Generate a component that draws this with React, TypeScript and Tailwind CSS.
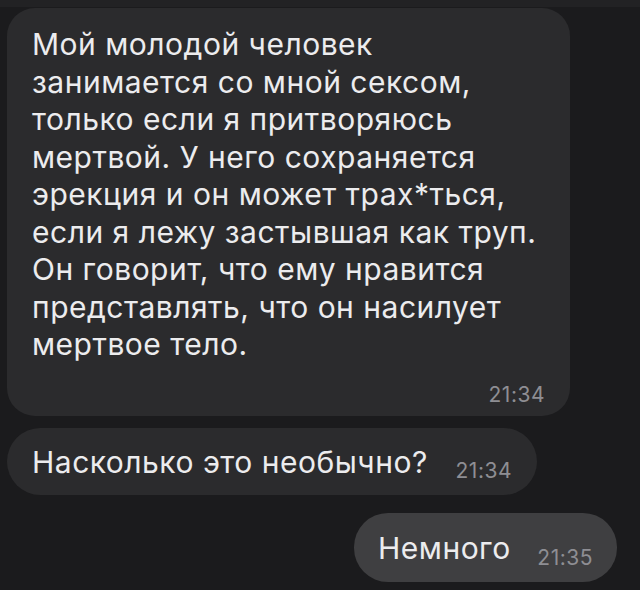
const lines = [
  "Мой молодой человек",
  "занимается со мной сексом,",
  "только если я притворяюсь",
  "мертвой. У него сохраняется",
  "эрекция и он может трах*ться,",
  "если я лежу застывшая как труп.",
  "Он говорит, что ему нравится",
  "представлять, что он насилует",
  "мертвое тело.",
];

export default function App() {
  return (
    <div className="w-[640px] h-[590px] overflow-hidden bg-[#1b1b1d] font-['Inter',sans-serif] text-[#ececee]">
      <div className="h-[7px] bg-[#222224]" />

      {/* входящее длинное */}
      <div className="ml-[7px] mt-[1px] w-[563px] h-[408px] rounded-[28px] bg-[#2b2b2d] pl-[25px] pr-[25px] pt-[18px] flex flex-col">
        <div className="text-[30px] leading-[37.5px] tracking-[0.5px]">
          {lines.map((l) => (
            <div key={l} className="whitespace-nowrap">{l}</div>
          ))}
        </div>
        <div className="flex justify-end mt-[19px]">
          <span className="text-[21px] leading-[24px] tracking-[0.5px] text-[#8e8e93]">21:34</span>
        </div>
      </div>

      {/* входящее короткое */}
      <div className="ml-[7px] mt-[12px] w-[530px] h-[67px] rounded-[34px] bg-[#2b2b2d] px-[25px] flex items-center justify-between">
        <span className="text-[30px] leading-[36px] tracking-[0.5px] whitespace-nowrap">Насколько это необычно?</span>
        <span className="text-[21px] leading-[24px] tracking-[0.5px] text-[#8e8e93] mt-[18px]">21:34</span>
      </div>

      {/* исходящее */}
      <div className="flex justify-end pr-[23px] mt-[18px]">
        <div className="w-[263px] h-[69px] rounded-[34px] bg-[#3f3f41] px-[24px] flex items-center justify-between">
          <span className="text-[30px] leading-[36px] tracking-[0.5px] whitespace-nowrap">Немного</span>
          <span className="text-[21px] leading-[24px] tracking-[0.5px] text-[#8e8e93] mt-[20px]">21:35</span>
        </div>
      </div>
    </div>
  );
}
